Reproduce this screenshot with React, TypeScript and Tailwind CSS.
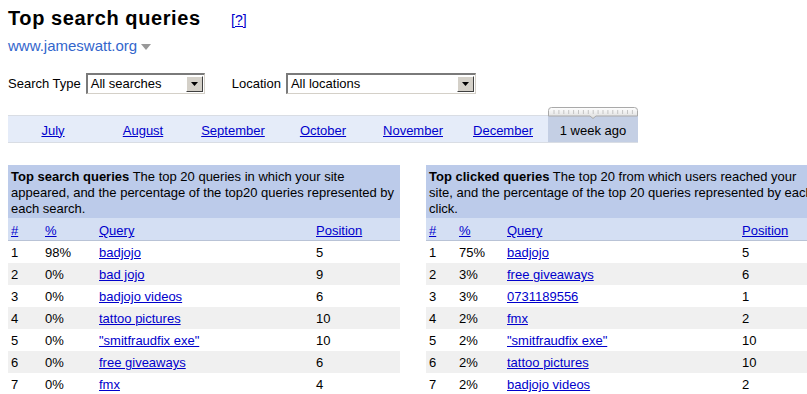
import React from 'react';

const MONTHS = ['July', 'August', 'September', 'October', 'November', 'December'];

const SEARCH_ROWS = [
  { n: 1, pct: '98%', q: 'badjojo', pos: '5' },
  { n: 2, pct: '0%', q: 'bad jojo', pos: '9' },
  { n: 3, pct: '0%', q: 'badjojo videos', pos: '6' },
  { n: 4, pct: '0%', q: 'tattoo pictures', pos: '10' },
  { n: 5, pct: '0%', q: '"smitfraudfix exe"', pos: '10' },
  { n: 6, pct: '0%', q: 'free giveaways', pos: '6' },
  { n: 7, pct: '0%', q: 'fmx', pos: '4' },
];

const CLICK_ROWS = [
  { n: 1, pct: '75%', q: 'badjojo', pos: '5' },
  { n: 2, pct: '3%', q: 'free giveaways', pos: '6' },
  { n: 3, pct: '3%', q: '0731189556', pos: '1' },
  { n: 4, pct: '2%', q: 'fmx', pos: '2' },
  { n: 5, pct: '2%', q: '"smitfraudfix exe"', pos: '10' },
  { n: 6, pct: '2%', q: 'tattoo pictures', pos: '10' },
  { n: 7, pct: '2%', q: 'badjojo videos', pos: '2' },
];

function FakeSelect({ value, width }: { value: string; width: string }) {
  return (
    <div className={`${width} h-[21px] flex items-stretch bg-white border-t-2 border-l-2 border-b border-r border-t-[#7a7a7a] border-l-[#7a7a7a] border-b-[#d4d0c8] border-r-[#d4d0c8]`}>
      <span className="flex-1 pl-[3px] leading-[18px] text-[13px] text-black">{value}</span>
      <span className="w-[17px] my-[1px] mr-[1px] flex items-center justify-center bg-[#d4d0c8] border border-t-white border-l-white border-b-[#404040] border-r-[#404040]">
        <svg width="7" height="4" viewBox="0 0 7 4"><path d="M0 0h7L3.5 4z" fill="#000" /></svg>
      </span>
    </div>
  );
}

function SliderThumb() {
  const ticks = Array.from({ length: 17 }, (_, i) => 6 + i * 4.9);
  return (
    <svg width="90" height="12" viewBox="0 0 90 12" className="absolute left-0 top-[-9px]">
      <defs>
        <linearGradient id="thumb" x1="0" y1="0" x2="0" y2="1">
          <stop offset="0" stopColor="#ffffff" />
          <stop offset="1" stopColor="#dcdcdc" />
        </linearGradient>
      </defs>
      <path d="M0.5 9V3.5Q0.5 0.5 3.5 0.5H86.5Q89.5 0.5 89.5 3.5V9H48L45 11.5L42 9Z" fill="url(#thumb)" stroke="#a9a9a9" />
      {ticks.map(x => (
        <line key={x} x1={x} y1="3" x2={x} y2="7" stroke="#c4c4c4" strokeWidth="1" />
      ))}
    </svg>
  );
}

type Row = { n: number; pct: string; q: string; pos: string };

function QueryTable({ title, lines, rows, cols }: { title: string; lines: string[]; rows: Row[]; cols: string }) {
  return (
    <div className="w-[392px] shrink-0">
      <div className="bg-[#bccbea] pt-[4px] pb-[1px] pl-[3px] leading-[16px] text-[13px] whitespace-nowrap">
        <div><b>{title}</b> {lines[0]}</div>
        <div>{lines[1]}</div>
        <div>{lines[2]}</div>
      </div>
      <div className={`grid ${cols} pl-[3px] pt-[3px] h-[23px] items-center bg-[#d4dff3] border-b border-[#b9c3d6] text-[13px]`}>
        <a className="text-[#0000cc] underline">#</a>
        <a className="text-[#0000cc] underline">%</a>
        <a className="text-[#0000cc] underline">Query</a>
        <a className="text-[#0000cc] underline">Position</a>
      </div>
      {rows.map((r, i) => (
        <div key={r.n} className={`grid ${cols} pl-[3px] pt-[2px] h-[22px] items-center text-[13px] ${i % 2 === 1 ? 'bg-[#f0f0f0]' : 'bg-white'}`}>
          <span>{r.n}</span>
          <span>{r.pct}</span>
          <a className="text-[#0000cc] underline">{r.q}</a>
          <span>{r.pos}</span>
        </div>
      ))}
    </div>
  );
}

export default function App() {
  return (
    <div className="w-[807px] h-[394px] overflow-hidden bg-white text-black font-['Liberation_Sans',Arial,sans-serif]">
      {/* Title */}
      <div className="pl-[8px] pt-[6px] flex items-baseline h-[30px]">
        <div className="w-[223px] text-[20px] leading-[24px] font-bold tracking-[0.6px]">Top search queries</div>
        <a className="text-[14px] text-[#0000cc] underline">[?]</a>
      </div>
      <div className="pl-[8px] mt-[7px] flex items-center gap-[4px] h-[18px]">
        <a className="text-[15px] leading-[18px] text-[#3366cc]">www.jameswatt.org</a>
        <svg width="10" height="6" viewBox="0 0 10 6" className="mt-[2px]"><path d="M0 0h10L5 6z" fill="#999" /></svg>
      </div>

      {/* Filters */}
      <div className="pl-[8px] mt-[18px] flex items-center text-[13px]">
        <span className="mr-[5px]">Search Type</span>
        <FakeSelect value="All searches" width="w-[119px]" />
        <span className="ml-[27px] mr-[5px]">Location</span>
        <FakeSelect value="All locations" width="w-[190px]" />
      </div>

      {/* Timeline */}
      <div className="ml-[8px] mt-[21px] w-[630px] h-[28px] flex bg-[#e5ecf9] border-y border-[#d9dde4] text-[13px]">
        {MONTHS.map(m => (
          <div key={m} className="w-[90px] pt-[3px] flex items-center justify-center">
            <a className="text-[#0000cc] underline">{m}</a>
          </div>
        ))}
        <div className="relative w-[90px] pt-[3px] flex items-center justify-center bg-[#c4cfe4]">
          <SliderThumb />
          <span>1 week ago</span>
        </div>
      </div>

      {/* Tables */}
      <div className="pl-[8px] mt-[22px] flex gap-[26px]">
        <QueryTable
          title="Top search queries"
          lines={[
            'The top 20 queries in which your site',
            'appeared, and the percentage of the top20 queries represented by',
            'each search.',
          ]}
          rows={SEARCH_ROWS}
          cols="grid-cols-[34px_54px_217px_1fr]"
        />
        <QueryTable
          title="Top clicked queries"
          lines={[
            'The top 20 from which users reached your',
            'site, and the percentage of the top 20 queries represented by each',
            'click.',
          ]}
          rows={CLICK_ROWS}
          cols="grid-cols-[30px_48px_235px_1fr]"
        />
      </div>
    </div>
  );
}
